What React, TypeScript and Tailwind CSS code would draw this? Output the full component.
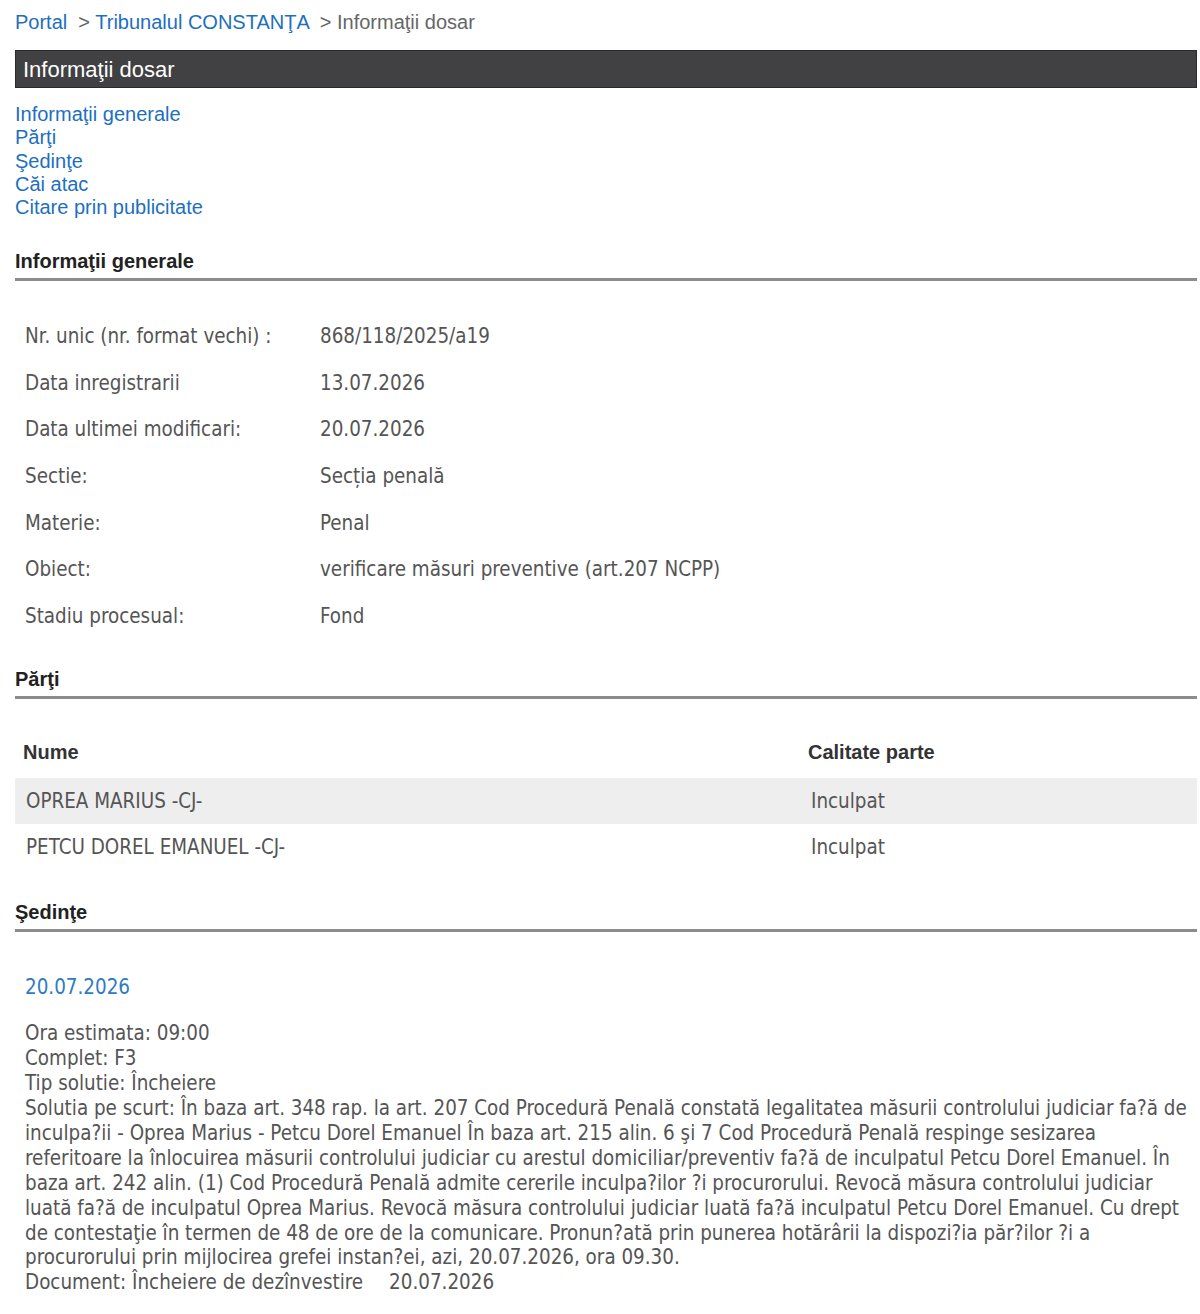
const info: [string, string][] = [
  ["Nr. unic (nr. format vechi) :", "868/118/2025/a19"],
  ["Data inregistrarii", "13.07.2026"],
  ["Data ultimei modificari:", "20.07.2026"],
  ["Sectie:", "Secția penală"],
  ["Materie:", "Penal"],
  ["Obiect:", "verificare măsuri preventive (art.207 NCPP)"],
  ["Stadiu procesual:", "Fond"],
];

const parti = [
  { nume: "OPREA MARIUS -CJ-", calitate: "Inculpat" },
  { nume: "PETCU DOREL EMANUEL -CJ-", calitate: "Inculpat" },
];

const links = ["Informaţii generale", "Părţi", "Şedinţe", "Căi atac", "Citare prin publicitate"];

function SectionTitle({ children }: { children: string }) {
  return (
    <h2 className="text-[20px] leading-[24px] font-bold text-[#222] pb-[5px] border-b-[3px] border-[#8c8c8c]">
      {children}
    </h2>
  );
}

export default function App() {
  return (
    <div className="min-h-[1314px] bg-white pl-[15px] pr-[3px] font-['Liberation_Sans',Arial,sans-serif]">
      {/* breadcrumb */}
      <div className="pt-[10px] text-[20px] leading-[24px] text-[#666] whitespace-pre">
        <a className="text-[#1d6fbf]">Portal</a>
        <span>{"  > "}</span>
        <a className="text-[#1d6fbf]">Tribunalul CONSTANŢA</a>
        <span>{"  > Informaţii dosar"}</span>
      </div>

      <div className="mt-[16px] h-[38px] flex items-center pl-[7px] bg-[#414042] border border-[#2a2a2a] text-[22px] text-white">
        Informaţii dosar
      </div>

      <div className="mt-[15px] text-[20px] leading-[23.25px] text-[#1d6fbf]">
        {links.map((l) => (
          <a key={l} className="block w-fit">
            {l}
          </a>
        ))}
      </div>

      <div className="mt-[30px]">
        <SectionTitle>Informaţii generale</SectionTitle>
      </div>

      <table className="mt-[32px] w-full font-['DejaVu_Sans_Condensed','DejaVu_Sans',sans-serif] [font-stretch:condensed] text-[20.4px] text-[#555]">
        <tbody>
          {info.map(([k, v]) => (
            <tr key={k} className="h-[46.6px]">
              <td className="w-[295px] pl-[10px]">{k}</td>
              <td className="pl-[10px]">{v}</td>
            </tr>
          ))}
        </tbody>
      </table>

      <div className="mt-[28px]">
        <SectionTitle>Părţi</SectionTitle>
      </div>

      <table className="mt-[29px] w-full text-[20px]">
        <thead>
          <tr className="h-[50px] text-[#333]">
            <th className="w-[785px] pl-[8px] pb-[3px] text-left font-bold">Nume</th>
            <th className="pl-[8px] pb-[3px] text-left font-bold">Calitate parte</th>
          </tr>
        </thead>
        <tbody className="font-['DejaVu_Sans_Condensed','DejaVu_Sans',sans-serif] [font-stretch:condensed] text-[20.4px] text-[#555]">
          {parti.map((p, i) => (
            <tr key={p.nume} className={i === 0 ? "h-[46px] bg-[#eeeeee]" : "h-[46px]"}>
              <td className="pl-[11px]">{p.nume}</td>
              <td className="pl-[11px]">{p.calitate}</td>
            </tr>
          ))}
        </tbody>
      </table>

      <div className="mt-[30px]">
        <SectionTitle>Şedinţe</SectionTitle>
      </div>

      <div className="pl-[10px] font-['DejaVu_Sans_Condensed','DejaVu_Sans',sans-serif] [font-stretch:condensed] text-[20.4px] leading-[24.9px] text-[#555]">
        <div className="mt-[43px] text-[#2f7bc3]">20.07.2026</div>
        <div className="mt-[21px] w-[1165px]">
          <div>Ora estimata: 09:00</div>
          <div>Complet: F3</div>
          <div>Tip solutie: Încheiere</div>
          <div>
            Solutia pe scurt: În baza art. 348 rap. la art. 207 Cod Procedură Penală constată legalitatea
            măsurii controlului judiciar fa?ă de inculpa?ii - Oprea Marius - Petcu Dorel Emanuel În baza
            art. 215 alin. 6 şi 7 Cod Procedură Penală respinge sesizarea referitoare la înlocuirea măsurii
            controlului judiciar cu arestul domiciliar/preventiv fa?ă de inculpatul Petcu Dorel Emanuel. În
            baza art. 242 alin. (1) Cod Procedură Penală admite cererile inculpa?ilor ?i procurorului. Revocă
            măsura controlului judiciar luată fa?ă de inculpatul Oprea Marius. Revocă măsura controlului
            judiciar luată fa?ă inculpatul Petcu Dorel Emanuel. Cu drept de contestaţie în termen de 48 de
            ore de la comunicare. Pronun?ată prin punerea hotărârii la dispozi?ia păr?ilor ?i a procurorului
            prin mijlocirea grefei instan?ei, azi, 20.07.2026, ora 09.30.
          </div>
          <div>
            Document: Încheiere de dezînvestire<span className="ml-[26px]">20.07.2026</span>
          </div>
        </div>
      </div>
    </div>
  );
}
